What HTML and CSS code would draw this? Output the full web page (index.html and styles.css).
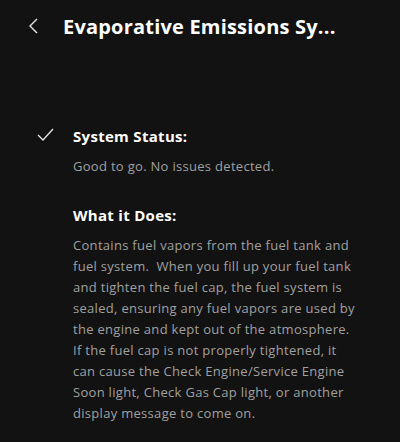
FILE: index.html
```html
<!DOCTYPE html>
<html lang="en">

<head>
    <meta charset="UTF-8">
    <meta name="viewport" content="width=device-width, initial-scale=1.0">
    <title>Evaporative Emissions System</title>
    <link rel="stylesheet" href="styles.css">
</head>

<body>
    <div class="screen">
        <div class="top-bar">
            <button class="back-button" aria-label="Back">
                <svg width="10" height="16" viewBox="0 0 10 16">
                    <path d="M9 1 L2 8 L9 15" fill="none" stroke="#e6e6e6" stroke-width="1.4" />
                </svg>
            </button>
            <h1 class="page-title">Evaporative Emissions Sy...</h1>
        </div>

        <div class="content">
            <div class="status-row">
                <div class="status-icon">
                    <svg width="17" height="13" viewBox="0 0 17 13">
                        <path d="M1 7 L6 12 L16 1" fill="none" stroke="#e6e6e6" stroke-width="1.3" />
                    </svg>
                </div>
                <div class="status-body">
                    <h2 class="section-title">System Status:</h2>
                    <p class="section-text">Good to go. No issues detected.</p>

                    <h2 class="section-title second">What it Does:</h2>
                    <p class="section-text">Contains fuel vapors from the fuel tank and<br>
                        fuel system.&nbsp; When you fill up your fuel tank<br>
                        and tighten the fuel cap, the fuel system is<br>
                        sealed, ensuring any fuel vapors are used by<br>
                        the engine and kept out of the atmosphere.<br>
                        If the fuel cap is not properly tightened, it<br>
                        can cause the Check Engine/Service Engine<br>
                        Soon light, Check Gas Cap light, or another<br>
                        display message to come on.</p>
                </div>
            </div>
        </div>
    </div>
</body>

</html>
```

FILE: styles.css
```css
body {
    margin: 0;
    background-color: #121212;
    font-family: "Open Sans", sans-serif;
    color: #fff;
}

.screen {
    width: 400px;
    height: 442px;
    overflow: hidden;
}

.top-bar {
    display: flex;
    align-items: center;
    height: 52px;
    padding-left: 28px;
}

.back-button {
    background: none;
    border: none;
    padding: 0;
    width: 35px;
    height: 20px;
    display: flex;
    align-items: center;
    cursor: pointer;
}

.page-title {
    margin: 0;
    font-size: 20px;
    font-weight: 700;
    letter-spacing: 0.2px;
}

.content {
    padding: 74px 0 0 37px;
}

.status-row {
    display: flex;
}

.status-icon {
    width: 36px;
    flex-shrink: 0;
    padding-top: 2px;
}

.status-icon svg {
    display: block;
}

.status-body {
    width: 300px;
}

.section-title {
    margin: 0;
    font-size: 15px;
    font-weight: 700;
    line-height: 20px;
    letter-spacing: 0.3px;
}

.section-title.second {
    margin-top: 28px;
}

.section-text {
    margin: 10px 0 0;
    font-size: 13px;
    line-height: 21px;
    letter-spacing: 0.3px;
    white-space: nowrap;
    color: #a0a0a0;
}
```
